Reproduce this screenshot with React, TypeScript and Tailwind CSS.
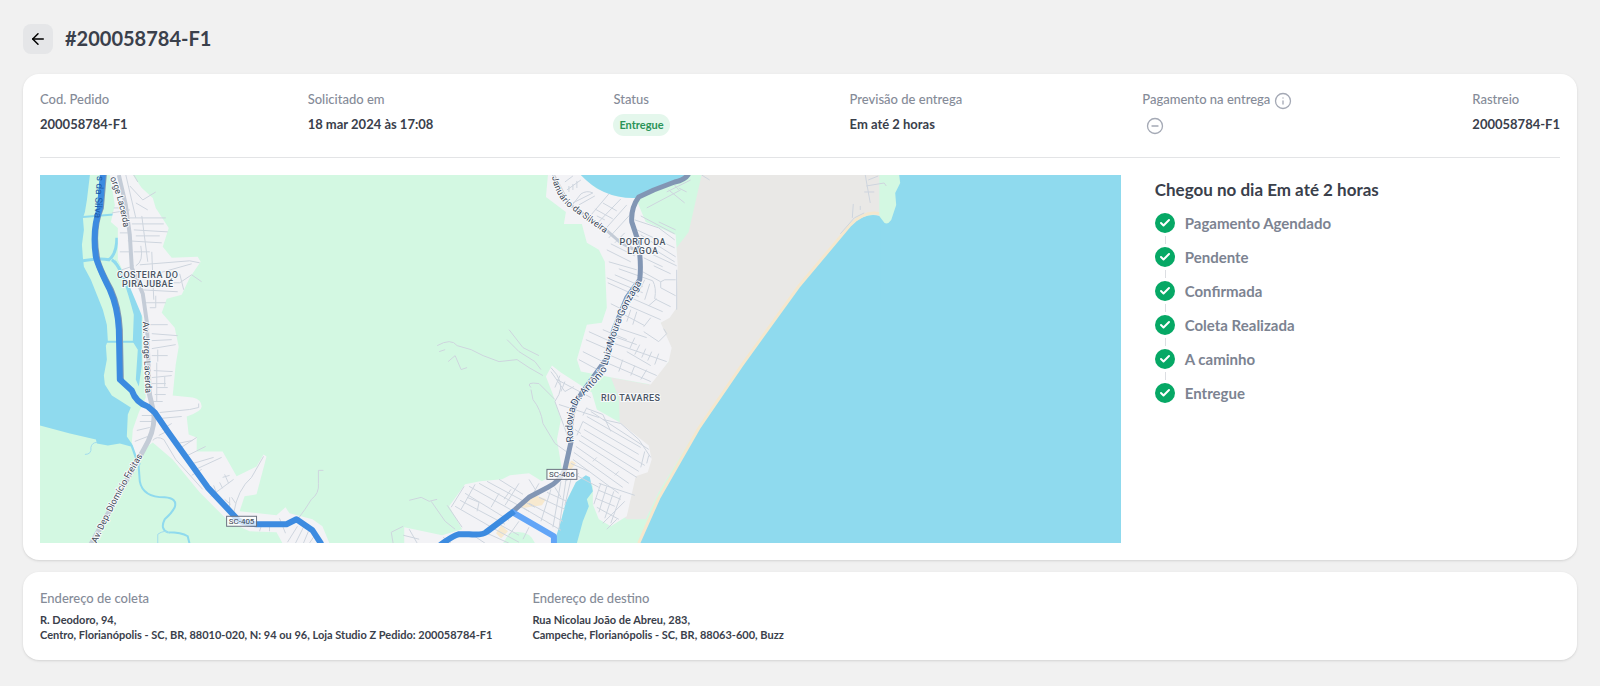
import React from "react";
import { ArrowLeft, Check, CircleMinus, Info } from "lucide-react";

const steps = ["Pagamento Agendado", "Pendente", "Confirmada", "Coleta Realizada", "A caminho", "Entregue"];

const addresses = [
  {
    title: "Endereço de coleta",
    street: "R. Deodoro, 94,",
    rest: "Centro, Florianópolis - SC, BR, 88010-020, N: 94 ou 96, Loja Studio Z Pedido: 200058784-F1",
  },
  {
    title: "Endereço de destino",
    street: "Rua Nicolau João de Abreu, 283,",
    rest: "Campeche, Florianópolis - SC, BR, 88063-600, Buzz",
  },
];

// small streets, grouped by neighbourhood
const streets = [
  // Costeira do Pirajubaé
  "M126 175 L136 218 M130 186 L143 200 L156 192 M134 175 L138 182 M136 203 L148 210 M114 208 H126 M112 213 L130 210",
  "M130 218 H166 M132 224 H164 M134 230 L168 232 M136 236 H160 M128 241 L162 243 M142 216 L148 262 M128 233 H120",
  "M152 252 L154 300 M134 252 H150 M140 265 L190 261 L200 263 M160 273 L192 264 M156 283 H180 L192 275 L202 282",
  "M180 274 L184 290 M140 290 L178 292 M146 303 H166 M150 308 H156 V296 M120 252 H132 M122 270 L134 266 M141 246 Q144 262 136 266",
  "M150 325 H168 M152 334 L178 336 M152 341 L172 340 M152 349 L176 345 M152 356 H168 M158 350 V362 M154 371 L173 372",
  "M152 378 L172 376 M152 384 H166 M157 363 V402 M157 388 H168 M150 402 H163 M155 395 H166 M165 377 V387",
  "M160 413 L190 410 L199 408 V404 M160 419 L182 417 M142 416 H153 M140 422 H153 M137 431 L150 428 M135 442 L148 437 M162 430 L172 424 M159 436 L167 432",
  "M153 441 Q157 436 164 440 L176 460 L203 490 M180 449 L197 438 M178 444 L193 441 M184 458 L206 447 M190 465 L214 458 M196 470 L222 458 M192 476 L202 470",
  "M211 497 L234 480 M217 494 L214 486 M223 489 L220 483 M229 484 L225 475 M230 476 L223 478 M234 514 Q238 490 252 478 L264 457 M230 508 V498 M236 504 L232 498 M225 500 L231 505",
  "M299 519 Q306 510 312 500 Q320 494 319 484 V471 H324 M288 543 L298 527 M296 544 L304 528 M304 544 L309 532 M310 544 L314 538 M280 519 L286 534 M270 524 V532 M262 526 L260 532",
  // Porto da Lagoa
  "M566 182 L574 176 M568 190 L582 180 M570 192 V186 M574 190 V184 M578 188 V181 M574 203 L594 193 Q588 190 582 194 L572 207 M580 205 L596 196",
  "M588 220 L610 194 M596 226 L622 199 M604 232 L628 205 M610 238 L632 214 M616 243 L626 233 M598 216 L606 220 M596 209 L614 219 M604 203 L618 211",
  "M636 220 L660 228 L676 240 M634 228 L676 248 M642 235 L677 257 M644 250 L678 266 M643 242 L676 262 M645 258 L664 267 M655 266 L672 274",
  "M642 216 L676 234 M608 250 L632 262 M612 244 L636 256 M610 262 L638 270 M620 269 L654 281 Q658 288 656 299 L672 307 M616 275 L644 287",
  "M608 278 L644 293 M609 283 L640 297 M644 272 L662 282 L666 280 H677 M662 282 V288 L677 296 M646 280 L640 292 M651 284 L646 300 M658 299 L650 306",
  "M625 304 L662 320 M632 298 L664 312 M612 304 L622 309 M618 311 L646 326 M638 312 L634 325 M632 310 L628 322 M645 327 L652 318 M645 332 L660 342 L668 334 L665 329",
  "M613 336 L638 345 M618 328 L648 338 M604 330 L628 340 M590 332 L612 342 M587 340 L610 350 M628 352 L652 366 M631 349 L636 338 M636 355 L641 345 M643 358 L647 349",
  "M649 361 L653 352 M656 365 L660 354 M584 352 L608 364 M580 360 L606 374 M616 344 L668 362 M612 356 L658 376 M610 364 L652 382 M624 360 L620 372 M636 366 L632 376 M648 370 L642 380",
  "M670 190 L686 203 M668 192 L692 180 M680 188 L688 192 M675 184 L680 190 M648 208 L682 190 M660 222 L677 230 M678 270 V310",
  // Rio Tavares
  "M552 372 L566 392 L575 387 M558 380 L592 398 M561 376 L556 388 M566 382 L562 392 M552 368 Q566 382 560 395 L556 402 L570 440 M560 405 L600 418",
  "M584 422 L640 455 M584 422 L578 436 M588 417 L642 448 M592 412 L650 450 M588 409 L604 415 L612 432 M585 430 L646 466 M582 436 L640 472",
  "M580 441 L638 478 M577 447 L630 484 M575 453 L624 488 M574 460 L620 494 M570 472 L600 488 M604 420 L622 424 L640 440 L652 458 M594 462 L598 458",
  "M650 456 L648 464 M646 452 L642 468 M620 472 L616 476 M576 430 L582 434 M588 408 L584 416 M572 464 L590 472 M566 482 L580 474",
  "M602 484 L595 505 M608 487 L600 513 M615 492 L606 519 M622 496 L612 524 M600 491 L622 500 M597 499 L616 507 M598 508 L620 520 M604 524 L626 502 M608 530 L618 520 M600 484 L636 496",
  // Campeche
  "M470 487 L520 515 M466 494 L510 521 M461 501 L506 525 M456 507 L496 530 M480 484 L530 512 M488 482 L536 508 M500 480 L524 495 M465 487 L452 508",
  "M476 485 L462 510 M468 498 L480 503 L478 512 M500 494 L492 508 M512 490 L505 500 M520 484 L506 506 M530 480 L540 496 M540 484 L532 498",
  "M520 515 L558 537 M525 509 L562 531 M530 504 L564 522 M540 498 L566 510 M548 493 L568 502 M556 488 L562 498 M552 490 L542 522 M562 482 L554 528 M568 474 L560 530",
  "M488 534 L510 544 M494 529 L520 543 M474 536 L486 544 M500 525 L520 536 M520 522 L510 536 M530 528 L524 540 M410 530 L418 544 M404 536 L420 540 M444 538 L452 544 M448 506 L463 528",
  "M410 501 L422 498 L430 502 L438 500 M432 502 L446 522 L456 530 M566 506 L572 480 L576 470",
  // trails over the green area
  "M449 362 L456 356 L462 370 L468 368 M438 346 Q452 338 458 346 L472 350 L484 356 L500 362 L518 360 L530 368 L544 376",
  "M532 388 Q526 382 540 384 L556 400 M532 390 L534 400 Q542 410 544 424 L556 444 L570 454 M510 330 L524 348 L540 356",
  "M508 340 L520 352 L536 362 L542 370 M446 350 L440 352 M394 545 L392 533 L404 527",
  // north beach
  "M867 175 L870 192 L872 203 M866 192 H876 M868 186 L886 183 L888 186 M870 180 L880 176 M855 204 L854 218 M862 206 V210 M842 234 L856 218 L866 213 M703 175 L711 180",
];

interface RoadLabelProps {
  id: string;
  d: string;
  text: string;
  size?: number;
  fill?: string;
}

function RoadLabel({ id, d, text, size = 9, fill = "#3c4654" }: RoadLabelProps) {
  return (
    <>
      <path id={id} d={d} fill="none" />
      <text fontSize={size} fill={fill} stroke="#f8fafc" strokeWidth="2" paintOrder="stroke" strokeLinejoin="round" dominantBaseline="central">
        <textPath href={`#${id}`}>{text}</textPath>
      </text>
    </>
  );
}

interface ShieldProps {
  x: number;
  y: number;
  text: string;
}

function Shield({ x, y, text }: ShieldProps) {
  return (
    <g>
      <rect x={x - 15} y={y - 5} width="30" height="10" fill="#fff" fillOpacity="0.75" stroke="#6b7280" />
      <text x={x} y={y + 3} textAnchor="middle" fontSize="8" fill="#3c4654">{text}</text>
    </g>
  );
}

function DeliveryMap() {
  return (
    <svg
      viewBox="40 175 1083 369"
      preserveAspectRatio="xMidYMid slice"
      className="block w-full aspect-[1083/369] font-[Roboto,sans-serif]"
      role="img"
      aria-label="Mapa"
    >
      <rect x="40" y="175" width="1083" height="369" fill="#d3f8e2" />

      {/* bay */}
      <path fill="#8fdaee" d="M40 175 H90 L87 200 L85 212 L83 218 L84 230 L82 245 L83 258 L84 267 L91 280 L97 295 L103 310 L107 325 L108 341 L106 346 L107 360 L104 376 L105 385 L112 396 L120 401 L131 408 L128 415 L127 437 L136 450 L141 465 L137 464 L131 447 L120 444 L108 446 L97 444 L96 440 L70 434 L40 426 Z" />
      <g fill="none" stroke="#8fdaee">
        <path strokeWidth="2" d="M83 217 L120 214 M107 342 H136" />
        <path strokeWidth="3" d="M83 261 Q100 258 109 260 Q117 254 117 238 M112 260 Q118 264 122 275" />
        <path strokeWidth="2" d="M138 455 L140 482 Q143 498 165 498 Q178 499 175 508 Q172 514 165 520 Q160 530 168 533 Q182 533 188 537 L190 545" />
      </g>
      <path fill="#8fdaee" d="M115 259 Q121 269 127 280 Q139 296 142 312 V366 L139 387 L136 380 L138 350 L133 342 L134 315 Q126 285 120 272 Z" />
      <path fill="none" stroke="#a3dcec" d="M85 455 Q92 455 91 448 Q92 443 97 443 M158 545 V535 Q165 530 170 534" />

      {/* west urban area */}
      <path fill="#f3f3f6" d="M110 175 H133 L142 188 L153 198 L156 208 L169 228 L163 247 L172 258 L198 257 L201 262 L190 278 L182 295 L167 299 L162 313 L175 328 L179 347 L176 365 L173 396 L193 398 Q202 400 202 407 Q202 412 187 417 L189 435 L197 438 L197 452 H223 L237 477 L257 467 L264 455 L267 457 L257 495 L245 497 L240 512 L277 516 L286 508 L290 514 L313 520 L323 527 L330 544 H283 L277 533 L250 532 L230 523 L200 493 L173 460 L153 443 L143 450 L137 457 L132 443 L133 430 L139 413 L146 398 L143 365 V318 L127 280 L118 260 L118 228 L111 222 L115 205 Z" />

      {/* east side */}
      <path fill="#e9e8e6" d="M703 175 H883 V218 L873 214 L853 223 L800 287 L743 365 L700 427 L660 493 L647 520 H628 L600 500 L594 483 L620 400 L612 378 L650 385 L670 362 L662 323 L678 308 L678 248 L690 232 Z" />
      <path fill="#d3f8e2" d="M582 372 L612 378 L620 398 L621 424 L598 412 L592 392 Z" />
      <path fill="#f3f3f6" d="M549 175 H582 L597 188 L617 196 L637 198 L647 222 L677 235 L679 265 L678 308 L671 318 L662 323 L673 348 L670 362 L652 385 L613 378 L582 372 L578 360 L588 325 L603 323 L608 308 L606 262 L600 250 L588 243 L583 224 H565 L567 212 L547 197 Z" />
      <path fill="#f3f3f6" d="M547 377 L553 366 L562 373 L593 393 L598 410 L621 423 L650 446 L653 460 L649 473 L637 477 L628 517 L612 527 L600 520 L594 505 V487 L587 477 L577 483 L567 503 L556 544 H405 V528 L443 536 L463 530 L450 507 L466 485 L481 482 L503 480 L511 476 L530 474 L543 482 L563 470 L558 440 L562 420 L554 395 Z" />
      <path fill="#d3f8e2" d="M510 534 Q530 529 536 544 H504 Z" />
      <path fill="#f8e6c6" d="M522 509 L532 494 L547 500 L543 506 Z M497 534 L502 526 L509 532 L502 539 Z M567 466 L573 461 L577 464 L572 470 Z" opacity=".8" />

      {/* lagoon and lake */}
      <path fill="#8fdaee" d="M582 175 Q604 199 637 198 L667 185 L690 175 Z" />
      <path fill="#8fdaee" d="M577 483 L587 476 L591 478 L594 492 L588 500 L590 507 L584 522 L578 544 H555 L562 522 L567 503 Z" />

      {/* ocean with its beach line */}
      <path fill="#8fdaee" d="M640 544 L660 499 L700 430 L743 367 L800 288 L852 226 Q867 212 881 216 L1130 170 V550 H640 Z" />
      <path fill="#8fdaee" d="M882 175 H1130 V300 H882 Z" />
      <path fill="none" stroke="#f5e7cd" strokeWidth="3" d="M640 544 L660 499 L700 429 L743 366 L800 287 L852 225 Q867 210 882 214" />
      <path fill="#d3f8e2" d="M881 175 H901 L902 183 L897 193 L898 205 L893 220 Q888 227 884 220 L881 216 Z" />

      <g fill="none" stroke="#ced5de" strokeWidth="1">
        {streets.map((d) => (
          <path key={d} d={d} />
        ))}
      </g>

      {/* avenues */}
      <g fill="none" stroke="#c4ccd7" strokeWidth="5" strokeLinejoin="round">
        <path strokeWidth="4" d="M119 175 L126 205 L130 235 L132 268 L143 294 L147 322 L150 395" />
        <path d="M149 392 L154 413 Q156 430 144 450 L90 547" />
        <path strokeWidth="3" d="M553 172 L570 204 L605 228 L622 243 L640 252" />
      </g>

      {/* route */}
      <g fill="none" strokeWidth="6" strokeLinejoin="round">
        <path stroke="#8296b4" strokeWidth="5" d="M690 174 Q686 180 676 182 L655 190 L640 197 Q632 208 633 222 L639 240 Q643 262 641 280 L628 298 L615 330 L607 360 L582 395 Q570 410 572 443 L566 470 Q561 482 549 488 L530 498 L514 512" />
        <path stroke="#8198b5" d="M104 174 L101 208 Q92 230 97 257 Q98 266 111 290 Q119 308 120 330 L121 380" />
        <path stroke="#3c8be0" d="M103 174 L100 208 Q92 230 96 257 Q98 266 110 290 Q118 308 119 330 L120 380 L132 391 Q136 403 148 407 L155 413 L168 432 L208 488 L236 518 Q239 524 257 525 H287 L297 520 L313 531 L322 545" />
        <path stroke="#62a5f7" d="M512 512 L555 537 V546" />
        <path stroke="#3c8be0" d="M515 512 L487 533 Q484 536 470 535 H460 Q453 537 441 546" />
      </g>

      <RoadLabel id="rodovia" d="M571 443 Q566 415 578 398 L603 371 Q608 352 615 330 Q624 304 642 278" text="Rodovia Dr. Antônio Luiz Moura Gonzaga" size={10} fill="#34496a" />
      <RoadLabel id="januario" d="M556 176 Q560 198 576 208 L612 234" text="Januário da Silveira" />
      <RoadLabel id="jorge-norte" d="M113 177 Q124 204 128 236" text="orge Lacerda" />
      <RoadLabel id="jorge-sul" d="M146 322 L149 400" text="Av. Jorge Lacerda" />
      <RoadLabel id="diomicio" d="M94 543 Q118 490 146 446" text="Av. Dep. Diomício Freitas" />
      <path id="silva" d="M101 176 L98 226" fill="none" />
      <text fontSize="10" fill="#1c5ba8" dominantBaseline="central">
        <textPath href="#silva">s da Silva</textPath>
      </text>

      <g
        className="tracking-wider"
        fontSize="9"
        fontWeight="500"
        fill="#4b5563"
        stroke="#f8fafc"
        strokeWidth="2"
        paintOrder="stroke"
        textAnchor="middle"
      >
        <text x="148" y="278">COSTEIRA DO</text>
        <text x="148" y="287">PIRAJUBAÉ</text>
        <text x="644" y="245">PORTO DA</text>
        <text x="644" y="254">LAGOA</text>
        <text x="632" y="401">RIO TAVARES</text>
      </g>
      <Shield x={242} y={522} text="SC-405" />
      <Shield x={563} y={475} text="SC-406" />
    </svg>
  );
}

interface FieldProps {
  label: React.ReactNode;
  children: React.ReactNode;
}

function Field({ label, children }: FieldProps) {
  return (
    <div className="flex flex-col">
      <dt className="flex h-5 items-center gap-1 text-[13px] font-medium text-[#858b98]">{label}</dt>
      <dd className="mt-1 text-[13px] leading-5 font-bold text-[#3a404b]">{children}</dd>
    </div>
  );
}

export default function App() {
  return (
    <main className="min-h-screen bg-[#f1f1f1] px-[23px] py-6 font-[Lato,sans-serif] text-[#3a404b]">
      <header className="flex items-center gap-3">
        <button type="button" aria-label="Voltar" className="flex size-[30px] items-center justify-center rounded-lg bg-[#e5e6e8] text-black">
          <ArrowLeft className="size-[18px]" />
        </button>
        <h1 className="pb-0.5 text-xl font-bold leading-7">#200058784-F1</h1>
      </header>

      <section className="mt-5 rounded-2xl bg-white px-[17px] pt-4 pb-[17px] shadow-sm">
        <dl className="flex h-[68px] justify-between border-b border-[#e3e4e6]">
          <Field label="Cod. Pedido">200058784-F1</Field>
          <Field label="Solicitado em">18 mar 2024 às 17:08</Field>
          <Field label="Status">
            <span className="flex h-[22px] items-center rounded-full bg-[#e4f7ec] px-1.5 text-[11px] text-[#2a9358]">Entregue</span>
          </Field>
          <Field label="Previsão de entrega">Em até 2 horas</Field>
          <Field
            label={
              <>
                Pagamento na entrega <Info className="mt-0.5 size-[18px] stroke-[1.75] text-[#a4a9b5]" />
              </>
            }
          >
            <CircleMinus className="ml-1 mt-[3px] size-[18px] stroke-[1.75] text-[#a4a9b5]" />
          </Field>
          <Field label="Rastreio">200058784-F1</Field>
        </dl>

        <div className="mt-[17px] flex gap-8">
          <div className="min-w-0 flex-[8]">
            <DeliveryMap />
          </div>
          <div className="min-w-0 flex-[3] pl-0.5">
            <h2 className="text-[17px] font-bold leading-[30px]">Chegou no dia Em até 2 horas</h2>
            <ol className="mt-2">
              {steps.map((step, index) => (
                <li key={step}>
                  {index > 0 && <div className="my-[3px] ml-2.5 h-2 w-px bg-[#dcdee2]" />}
                  <div className="flex h-5 items-center gap-2.5">
                    <span className="flex size-5 items-center justify-center rounded-full bg-[#06a865] text-white">
                      <Check className="size-3 stroke-[4]" />
                    </span>
                    <span className="text-[15px] font-bold text-[#7c8391]">{step}</span>
                  </div>
                </li>
              ))}
            </ol>
          </div>
        </div>
      </section>

      <section className="mt-3 flex flex-wrap gap-x-10 gap-y-4 rounded-2xl bg-white px-[17px] pt-4 pb-[18px] shadow-sm">
        {addresses.map((address) => (
          <div key={address.title}>
            <h3 className="text-[13px] leading-5 font-medium text-[#858b98]">{address.title}</h3>
            <p className="mt-1 text-[11px] font-bold leading-[15px]">
              {address.street}
              <br />
              {address.rest}
            </p>
          </div>
        ))}
      </section>
    </main>
  );
}
